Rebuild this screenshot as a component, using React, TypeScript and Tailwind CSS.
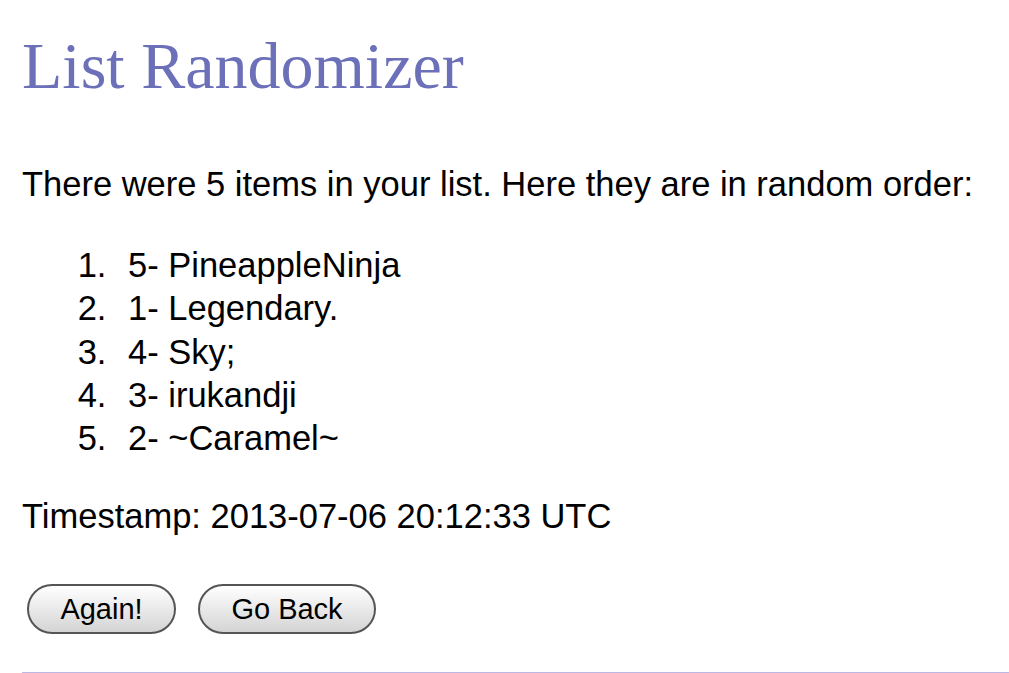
export default function App() {
  const items = ["5- PineappleNinja", "1- Legendary.", "4- Sky;", "3- irukandji", "2- ~Caramel~"];

  return (
    <div className="min-h-screen bg-white pl-[22px] pt-[26px] text-black [font-family:'Liberation_Sans',Arial,sans-serif]">
      <h1 className="text-[66px] leading-[80px] text-[#6b70b9] [font-family:'Liberation_Serif',Georgia,serif]">
        List Randomizer
      </h1>

      <p className="mt-[57px] text-[34.5px] leading-[43px]">
        There were 5 items in your list. Here they are in random order:
      </p>

      <ol className="mt-[38px] list-decimal pl-[94px] text-[34.5px] leading-[43.3px]">
        {items.map((item) => (
          <li key={item} className="pl-[12px]">{item}</li>
        ))}
      </ol>

      <p className="mt-[35px] text-[34.5px] leading-[43px]">Timestamp: 2013-07-06 20:12:33 UTC</p>

      <div className="mt-[46px] flex gap-[22px] pl-[5px]">
        <button className="h-[50px] w-[149px] rounded-full border-2 border-[#555] bg-gradient-to-b from-white to-[#d4d4d4] text-[29px]">
          Again!
        </button>
        <button className="h-[50px] w-[178px] rounded-full border-2 border-[#555] bg-gradient-to-b from-white to-[#d4d4d4] text-[29px]">
          Go Back
        </button>
      </div>

      <hr className="mt-[38px] border-t-2 border-[#bcb8e4]" />
    </div>
  );
}
